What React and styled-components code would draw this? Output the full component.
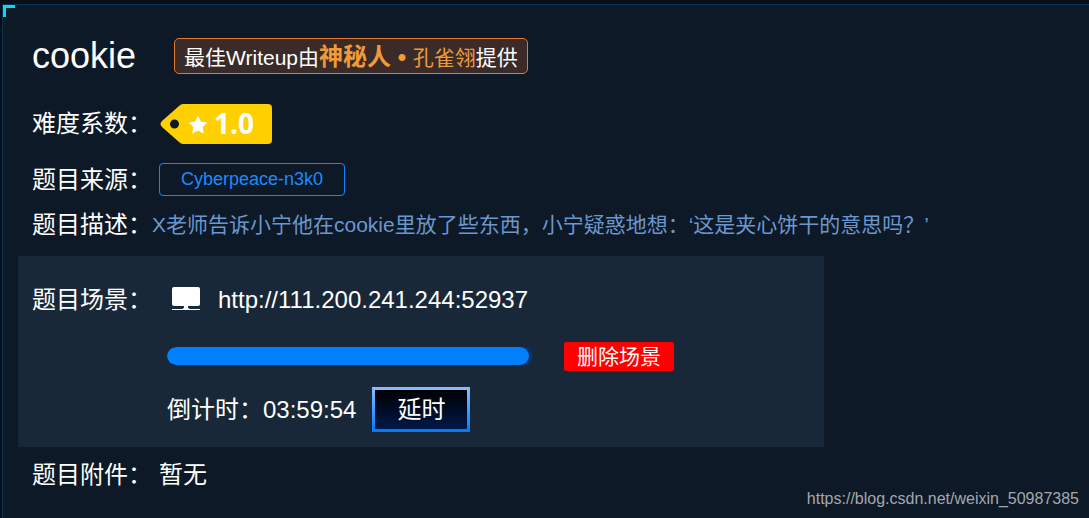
import React from 'react'
import styled, { createGlobalStyle } from 'styled-components'

const GlobalStyle = createGlobalStyle`
* {
box-sizing:border-box;
}
body {
margin:0;
background-color:#060e17;
color:#fff;
font-family:"Liberation Sans", "Noto Sans CJK SC", sans-serif;
}
#root {
display:flow-root;
}
`
const Panel = styled.main`
position:relative;
min-height:calc(100vh - 4px);
margin:4px 0 0 2px;
padding:22px 16px 16px 15px;
border:solid #0b3052;
border-width:1px 0 0 1px;
background-color:#0d1926;
`
const Corner = styled.span`
position:absolute;
top:0;
left:0;
width:12px;
height:12px;
border:solid #00dcf5;
border-width:3px 0 0 3px;
`
const Row = styled.div`
display:flex;
align-items:center;
min-height:${props => props.$height}px;
padding-left:14px;
`
const Title = styled.h1`
margin:0 38px 0 0;
font-size:36px;
line-height:44px;
font-weight:400;
`
const Badge = styled.p`
margin:0;
padding:4px 9px 0;
border:1px solid #e8762c;
border-radius:5px;
background-color:#3b2b28;
font-size:21px;
line-height:30px;
white-space:pre;
`
const Author = styled.span`
color:#f29a38;
`
const Rank = styled.strong`
font-size:24px;
line-height:24px;
font-weight:700;
`
const Label = styled.span`
flex:none;
width:${props => props.$width || 127}px;
font-size:24px;
line-height:32px;
`
const Tag = styled.svg`
display:block;
width:114px;
height:42px;
`
const Source = styled.a`
padding:0 21px;
border:1px solid #0f86ff;
border-radius:4px;
color:#1a8cff;
font-size:18px;
line-height:31px;
text-decoration:none;
`
const Description = styled.p`
margin:0;
color:#6b97cf;
font-size:21px;
line-height:32px;
`
const Scene = styled.section`
max-width:806px;
margin:2px 0 8px;
padding:16px 0 12px;
background-color:#182838;
`
const Details = styled.div`
padding-left:135px;
`
const Monitor = styled.svg`
flex:none;
width:28px;
height:26px;
margin:0 18px 0 13px;
`
const Address = styled.a`
color:#fff;
font-size:24px;
line-height:32px;
text-decoration:none;
`
const Track = styled.div`
width:366px;
height:18px;
margin-right:31px;
border-radius:9px;
background-color:#073760;
overflow:hidden;
`
const Fill = styled.div`
height:100%;
border-radius:9px;
background-color:#0080ff;
`
const DeleteButton = styled.button`
padding:0 13px;
border:0;
border-radius:2px;
background-color:#f00;
color:#fff;
font-family:inherit;
font-size:21px;
line-height:29px;
cursor:pointer;
`
const Countdown = styled.span`
margin-right:16px;
font-size:24px;
line-height:32px;
`
const DelayButton = styled.button`
padding:0 22px;
border:3px solid;
border-image:linear-gradient(#86bfff, #0078ff) 3;
background:linear-gradient(#000, #001848);
color:#fff;
font-family:inherit;
font-size:24px;
line-height:39px;
cursor:pointer;
`
const Text = styled.span`
font-size:24px;
line-height:32px;
`
const Watermark = styled.a`
position:absolute;
right:10px;
bottom:9px;
color:#a3a8ae;
font-size:16px;
line-height:20px;
text-decoration:none;
`

const App = () => {
    const total = 4 * 60 * 60;
    const left = 3 * 3600 + 59 * 60 + 54;
    const pad = (n) => String(n).padStart(2, '0')
    const time = [Math.floor(left / 3600), Math.floor(left / 60) % 60, left % 60].map(pad).join(':')
    // the fill only moves in whole percents
    const percent = Math.floor(left / total * 100)

    return (
        <>
            <GlobalStyle />
            <Panel>
                <Corner />
                <Row $height={58}>
                    <Title>cookie</Title>
                    <Badge>最佳Writeup由<Author><Rank>神秘人 • </Rank>孔雀翎</Author>提供</Badge>
                </Row>
                <Row $height={78}>
                    <Label>难度系数：</Label>
                    <Tag viewBox="0 0 114 42">
                        <path fillRule="evenodd" fill="#ffd000" d="M24 1H109Q113 1 113 5V37Q113 41 109 41H24Q22 41 20 39L3 24Q0 21 3 18L20 3Q22 1 24 1ZM15.500 16.500A4.500 4.500 0 1 0 15.500 25.500A4.500 4.500 0 1 0 15.500 16.500Z" />
                        <path fill="#fff" d="M39 12.500L41.800 18.400L48.400 19.400L43.700 24L44.800 30.800L39 27.600L33.200 30.800L34.300 24L29.600 19.400L36.200 18.400Z" />
                        <text x="55" y="31" fill="#fff" fontFamily="Open Sans" fontSize="28" fontWeight="700">1.0</text>
                    </Tag>
                </Row>
                <Row $height={32}>
                    <Label>题目来源：</Label>
                    <Source href="#">Cyberpeace-n3k0</Source>
                </Row>
                <Row $height={58}>
                    <Label $width={120}>题目描述：</Label>
                    <Description>X老师告诉小宁他在cookie里放了些东西，小宁疑惑地想：‘这是夹心饼干的意思吗？’</Description>
                </Row>
                <Scene>
                    <Row $height={56}>
                        <Label>题目场景：</Label>
                        <Monitor viewBox="0 0 28 26" fill="#fff">
                            <rect x="0" y="0" width="28" height="19" rx="2" />
                            <path d="M12 19H16V20.500L17.500 22H10.500L12 20.500Z" />
                            <rect x="0" y="22" width="28" height="1" />
                        </Monitor>
                        <Address href="http://111.200.241.244:52937">http://111.200.241.244:52937</Address>
                    </Row>
                    <Details>
                        <Row $height={56}>
                            <Track><Fill style={{ width: `${percent}%` }} /></Track>
                            <DeleteButton>删除场景</DeleteButton>
                        </Row>
                        <Row $height={51}>
                            <Countdown>倒计时：{time}</Countdown>
                            <DelayButton>延时</DelayButton>
                        </Row>
                    </Details>
                </Scene>
                <Row $height={40}>
                    <Label>题目附件：</Label>
                    <Text>暂无</Text>
                </Row>
                <Watermark href="https://blog.csdn.net/weixin_50987385">https://blog.csdn.net/weixin_50987385</Watermark>
            </Panel>
        </>
    )
}

export default App
